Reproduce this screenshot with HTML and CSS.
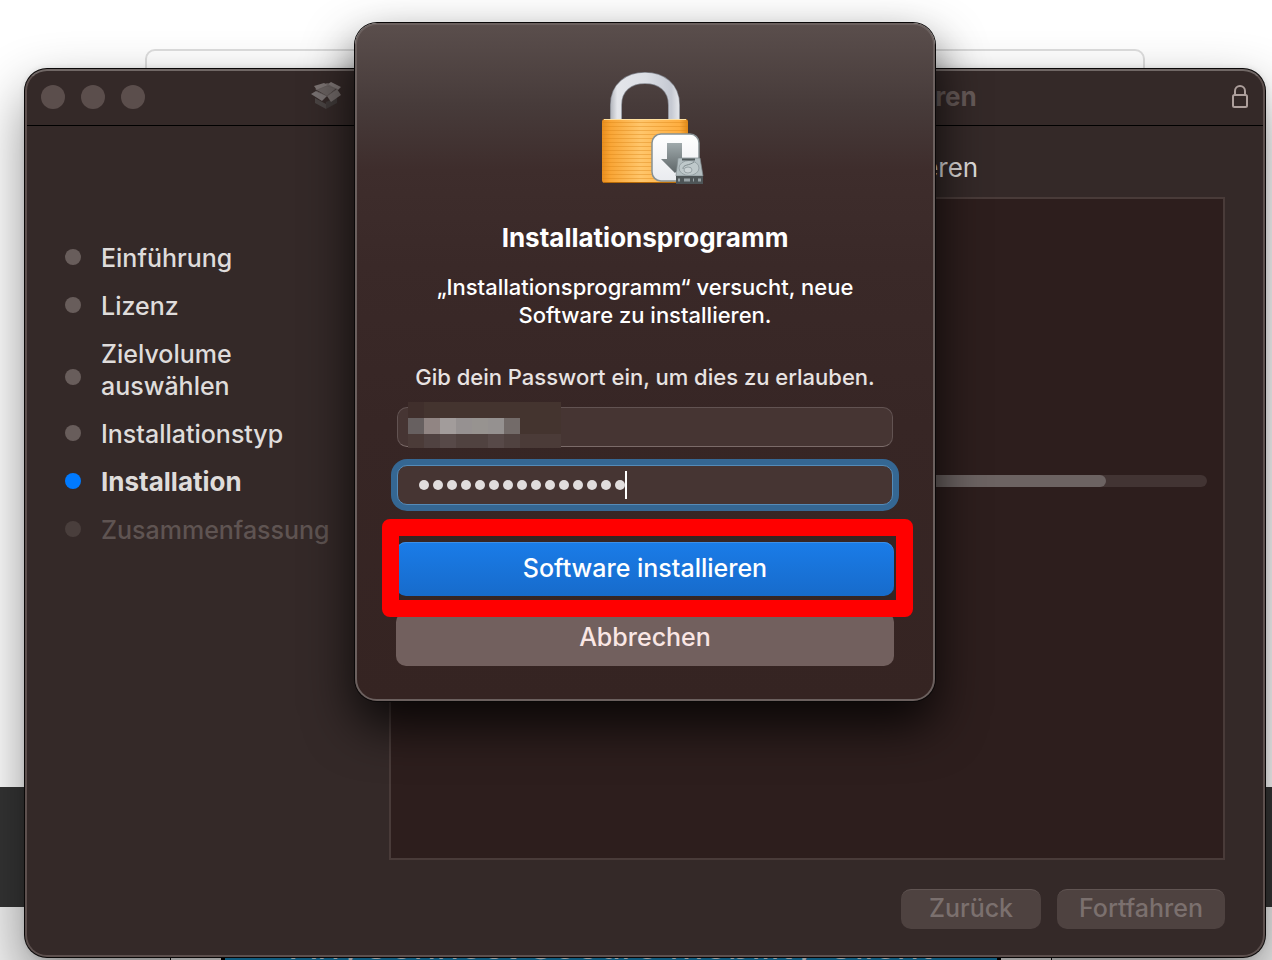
FILE: index.html
```html
<!DOCTYPE html>
<html lang="de">
<head>
<meta charset="utf-8">
<title>Installationsprogramm</title>
<link rel="stylesheet" href="styles.css">
</head>
<body>
<div class="desktop">
  <div class="page">
    <div class="page-top"><div class="page-card"></div></div>
    <div class="page-band"></div>
    <div class="page-bottom">
      <div class="page-figure"><div class="page-banner">AnyConnect Secure Mobility Client</div></div>
    </div>
  </div>

  <main class="window">
    <header class="titlebar">
      <div class="lights"><span class="light"></span><span class="light"></span><span class="light"></span></div>
      <div class="title">
        <svg class="box-icon" viewBox="0 0 30 28" aria-hidden="true">
          <path d="M4 16 15 22V27L4 21Z" fill="#4a4443"/>
          <path d="M15 20 26 15V21L15 27Z" fill="#3f3938"/>
          <path d="M4 7 16 1 27 5 16 14Z" fill="#696160"/>
          <path d="M3 4 13 1 17 3 6 8Z" fill="#7b7372"/>
          <path d="M17 2 20 0 30 5 27 8Z" fill="#7d7574"/>
          <path d="M5 9 16 14 11 19 0 12Z" fill="#777070"/>
          <path d="M16 14 26 7 30 13 20 20Z" fill="#6f6766"/>
          <path d="M6 8 16 4 26 7M5 9 16 14 26 7" fill="none" stroke="#625a59" stroke-width=".7"/>
        </svg>
        <span>„AnyConnect Secure Mobility Client“</span>
        <span>installieren</span>
      </div>
      <svg class="lock-icon" viewBox="0 0 18 26" aria-hidden="true">
        <rect x="2" y="11" width="14" height="12" rx="1.5"/><path d="M4 11V7a5 5 0 0 1 10 0v4"/>
      </svg>
    </header>
    <div class="body">
      <ol class="steps">
        <li>Einführung</li>
        <li>Lizenz</li>
        <li class="two-line">Zielvolume<br>auswählen</li>
        <li>Installationstyp</li>
        <li class="current">Installation</li>
        <li class="pending">Zusammenfassung</li>
      </ol>
      <section class="content">
        <h1>„AnyConnect Secure Mobility Client“ installieren</h1>
        <div class="pane"><div class="track"><div class="fill" style="width:87.4%"></div></div></div>
        <div class="actions"><button disabled class="back">Zurück</button><button disabled class="next">Fortfahren</button></div>
      </section>
    </div>
  </main>

  <form class="dialog" role="dialog" aria-labelledby="dialog-title">
    <svg class="padlock" viewBox="0 0 104 114" aria-hidden="true">
      <defs>
        <linearGradient id="gold"><stop offset="0" stop-color="#e88d1e"/><stop offset=".1" stop-color="#f9a535"/><stop offset=".45" stop-color="#ffc66b"/><stop offset=".9" stop-color="#ffae40"/><stop offset="1" stop-color="#e08918"/></linearGradient>
        <linearGradient id="steel" gradientUnits="userSpaceOnUse" x1="8" y1="0" x2="80" y2="0"><stop offset="0" stop-color="#aeb1b8"/><stop offset=".1" stop-color="#e4e6ea"/><stop offset=".5" stop-color="#dcdfe5"/><stop offset=".85" stop-color="#c5c9d2"/><stop offset=".95" stop-color="#e2e4e8"/><stop offset="1" stop-color="#a3a7af"/></linearGradient>
        <linearGradient id="arrow" x2="0" y2="1"><stop offset="0" stop-color="#a0aaac"/><stop offset="1" stop-color="#5e6668"/></linearGradient>
        <linearGradient id="tile" x2="0" y2="1"><stop offset="0" stop-color="#fff"/><stop offset="1" stop-color="#e9ebef"/></linearGradient>
        <pattern id="lines" width="8" height="4" patternUnits="userSpaceOnUse"><rect y="2" width="8" height="1" fill="#d98516" opacity=".4"/></pattern>
      </defs>
      <path d="M14 49V33C14 15 27 6 43 6S72 15 72 33V49" fill="none" stroke="#83868e" stroke-width="12"/>
      <path d="M14 49V33C14 15 27 6 43 6S72 15 72 33V49" fill="none" stroke="url(#steel)" stroke-width="10.500"/>
      <rect y="47" width="86" height="64" rx="3" fill="url(#gold)"/>
      <rect y="49" width="86" height="60" fill="url(#lines)"/>
      <path d="M2 47.500H84" stroke="#ffe0a0" stroke-width="1"/>
      <path d="M2 110.500H84" stroke="#b96c08" stroke-width="1"/>
      <rect x="50" y="62" width="47" height="47" rx="9" fill="url(#tile)" stroke="#879194" stroke-width="1.500"/>
      <path d="M65 71H80V87H86L73 101 59 87H65Z" fill="url(#arrow)"/>
      <path d="M76 86H98L101 104H74Z" fill="#b3bec1" stroke="#7f898c" stroke-width=".7"/>
      <path d="M74 104H101V112H74Z" fill="#4e5557"/>
      <ellipse cx="87" cy="96" rx="10" ry="7.500" fill="#bfc9cb" stroke="#8b979a" stroke-width=".8"/>
      <ellipse cx="86" cy="98" rx="4" ry="3" fill="#cbd3d5" stroke="#8b979a" stroke-width=".8"/>
      <path d="M81 97C81 92 87 94 92 90" fill="none" stroke="#7f8b8e"/>
      <path d="M80 87.500H93" fill="none" stroke="#525b5d" stroke-width="2"/>
      <path d="M76 108H78M82 108H88M91 108H92M96 108H99" stroke="#98a2a5" stroke-width="3"/>
    </svg>
    <h2 id="dialog-title">Installationsprogramm</h2>
    <p class="message">„Installationsprogramm“ versucht, neue<br>Software zu installieren.</p>
    <p class="hint">Gib dein Passwort ein, um dies zu erlauben.</p>
    <div class="user-field">
      <input class="field" type="text" aria-label="Benutzername">
      <svg class="mosaic" viewBox="0 0 153 46" shape-rendering="crispEdges" aria-hidden="true">
        <rect width="153" height="46" fill="#44342f"/>
        <rect y="32" width="153" height="14" fill="#4b3b38"/>
        <rect width="16" height="16" fill="#402f2c"/>
        <rect y="16" width="16" height="16" fill="#676060"/><rect x="16" y="16" width="16" height="16" fill="#918583"/><rect x="32" y="16" width="16" height="16" fill="#a29c9b"/><rect x="48" y="16" width="16" height="16" fill="#969191"/><rect x="64" y="16" width="16" height="16" fill="#979390"/><rect x="80" y="16" width="16" height="16" fill="#959190"/><rect x="96" y="16" width="16" height="16" fill="#736b69"/>
        <rect x="16" y="32" width="16" height="14" fill="#504241"/><rect x="32" y="32" width="16" height="14" fill="#574948"/><rect x="48" y="32" width="16" height="14" fill="#504240"/><rect x="64" y="32" width="16" height="14" fill="#504240"/><rect x="80" y="32" width="16" height="14" fill="#574948"/><rect x="96" y="32" width="16" height="14" fill="#504240"/>
      </svg>
    </div>
    <div class="password-field">
      <input class="field" type="password" aria-label="Passwort">
      <span class="dots" aria-hidden="true"><i></i><i></i><i></i><i></i><i></i><i></i><i></i><i></i><i></i><i></i><i></i><i></i><i></i><i></i><i></i><b></b></span>
    </div>
    <div class="install-wrap"><button type="button" class="install">Software installieren</button><span class="marker"></span></div>
    <button type="button" class="cancel">Abbrechen</button>
  </form>
</div>
</body>
</html>
```
FILE: styles.css
```css
* { box-sizing: border-box; }
body { margin: 0; font-family: Inter, "Liberation Sans", sans-serif; font-weight: 500; color: #dfdcdb; }
h1, h2, p, ol { margin: 0; padding: 0; }
button, input { font: inherit; }
.desktop { position: relative; min-height: 100vh; overflow: hidden; background: #fff; }

.page { position: absolute; inset: 0; display: flex; flex-direction: column; }
.page-top { flex: 1; padding: 49px 127px 0 145px; }
.page-card { height: 100px; border: 2px solid #dedede; border-radius: 10px; }
.page-band { height: 120px; background: #343434; }
.page-bottom { height: 53px; background: #f0f0f0; padding: 0 220px 0 170px; }
.page-figure { height: 53px; padding: 0 50px; border: 1px solid #111; border-bottom: 0; background: #fff; }
.page-banner { height: 53px; border: 4px solid #000; border-width: 0 4px; background: #1a92cc; color: #fff; font-size: 39px; font-weight: 400; line-height: 74px; text-align: center; white-space: nowrap; }

.window { position: absolute; inset: 69px 7px 3px 25px; display: flex; flex-direction: column; background: #342928; border: 2px solid #5d504e; border-top-color: #716866; border-radius: 22px; box-shadow: 0 0 0 1px #0a0808, 0 0 6px rgba(0,0,0,.15), 0 24px 56px rgba(0,0,0,.45); }
.titlebar { height: 55px; display: flex; align-items: center; padding: 0 14px 2px; border-bottom: 1px solid #000; }
.lights { display: flex; gap: 16px; }
.light { width: 24px; height: 24px; border-radius: 50%; background: #5b4e4c; }
.title { flex: 1; display: flex; justify-content: center; align-items: center; gap: 12px; padding: 0 88px 2px 0; font-size: 26px; font-weight: 700; color: #665a58; white-space: nowrap; }
.box-icon { width: 30px; height: 28px; }
.lock-icon { width: 18px; height: 26px; fill: none; stroke: #ad9f9c; stroke-width: 2; }
.body { flex: 1; display: flex; padding: 24px 38px 26px; }
.steps { width: 324px; flex: none; padding-top: 92px; list-style: none; display: flex; flex-direction: column; gap: 16px; font-size: 25px; line-height: 32px; }
.steps li { display: flex; align-items: center; gap: 20px; }
.steps li::before { content: ""; width: 16px; height: 16px; margin-bottom: 2px; border-radius: 50%; background: #685d5b; }
.steps .two-line::before { margin-top: 16px; }
.steps .current { font-size: 26px; font-weight: 700; }
.steps .current::before { background: #007aff; }
.steps .pending { color: #5f5452; }
.steps .pending::before { background: #493e3c; }
.content { flex: 1; min-width: 0; display: flex; flex-direction: column; }
h1 { font-size: 26px; line-height: 36px; font-weight: 400; white-space: nowrap; }
.pane { flex: 1; margin-top: 11px; padding: 276px 16px 0; border: 2px solid #493b39; background: #2d1e1d; }
.track { height: 12px; border-radius: 6px; background: #423433; overflow: hidden; }
.fill { height: 12px; border-radius: 6px; background: #6c6362; }
.actions { display: flex; justify-content: flex-end; gap: 16px; margin-top: 29px; }
.actions button { height: 40px; padding: 0 0 4px; border: 0; border-top: 1px solid #605452; border-radius: 10px; background: #4e4240; color: #7b706e; font-size: 25px; }
.actions .back { width: 140px; }
.actions .next { width: 168px; }

.dialog { position: absolute; top: 23px; left: calc(50% + 9px); width: 580px; margin-left: -290px; padding: 47px 39px 33px; display: flex; flex-direction: column; align-items: center; background: linear-gradient(#5a4e4c 0, #473b3a 80px, #3e2d2c 145px, #3a2928 240px, #372625 400px, #352422 100%); border: 2px solid #6b605e; border-radius: 22px; box-shadow: 0 0 0 1px #0a0808, 0 24px 50px rgba(0,0,0,.8); }
.padlock { width: 104px; height: 114px; margin-left: 17px; }
h2 { margin-top: 36px; font-size: 26px; line-height: 32px; font-weight: 700; color: #fff; }
.message { margin-top: 19px; font-size: 22px; line-height: 28px; text-align: center; color: #fff; }
.hint { margin-top: 34px; font-size: 22px; line-height: 28px; color: #e8e3e2; white-space: nowrap; }
.field { display: block; width: 100%; height: 40px; padding: 0 20px; border: 1px solid #625352; border-bottom-color: #7b6b69; border-radius: 10px; background: #463533; outline: 0; color: #e0dddd; }
.user-field, .password-field { position: relative; width: 100%; padding: 0 1px; }
.user-field { margin-top: 16px; }
.mosaic { position: absolute; left: 12px; top: -5px; width: 153px; height: 46px; }
.password-field { margin-top: 18px; }
.password-field .field { border-color: #558bb8; box-shadow: 0 0 0 6px #356793; }
.dots { position: absolute; left: 23px; top: 6px; display: flex; align-items: center; gap: 4px; }
.dots i { width: 10px; height: 10px; border-radius: 50%; background: #e1dddd; }
.dots b { width: 2px; height: 28px; margin-left: -4px; background: #fff; }
.install-wrap { position: relative; width: 100%; margin-top: 37px; }
.install, .cancel { display: block; width: 100%; border: 0; border-radius: 10px; font-size: 25px; }
.install { height: 54px; padding: 0 0 2px; background: linear-gradient(#1a7ce8, #176bcb); box-shadow: inset 0 1px #3b8fe8; color: #fff; }
.marker { position: absolute; inset: -23px -19px -21px -14px; border: 17px solid #f00; border-radius: 8px; }
.cancel { height: 54px; margin-top: 16px; padding: 0 0 4px; background: #72605e; color: #f9e6e4; }
```
